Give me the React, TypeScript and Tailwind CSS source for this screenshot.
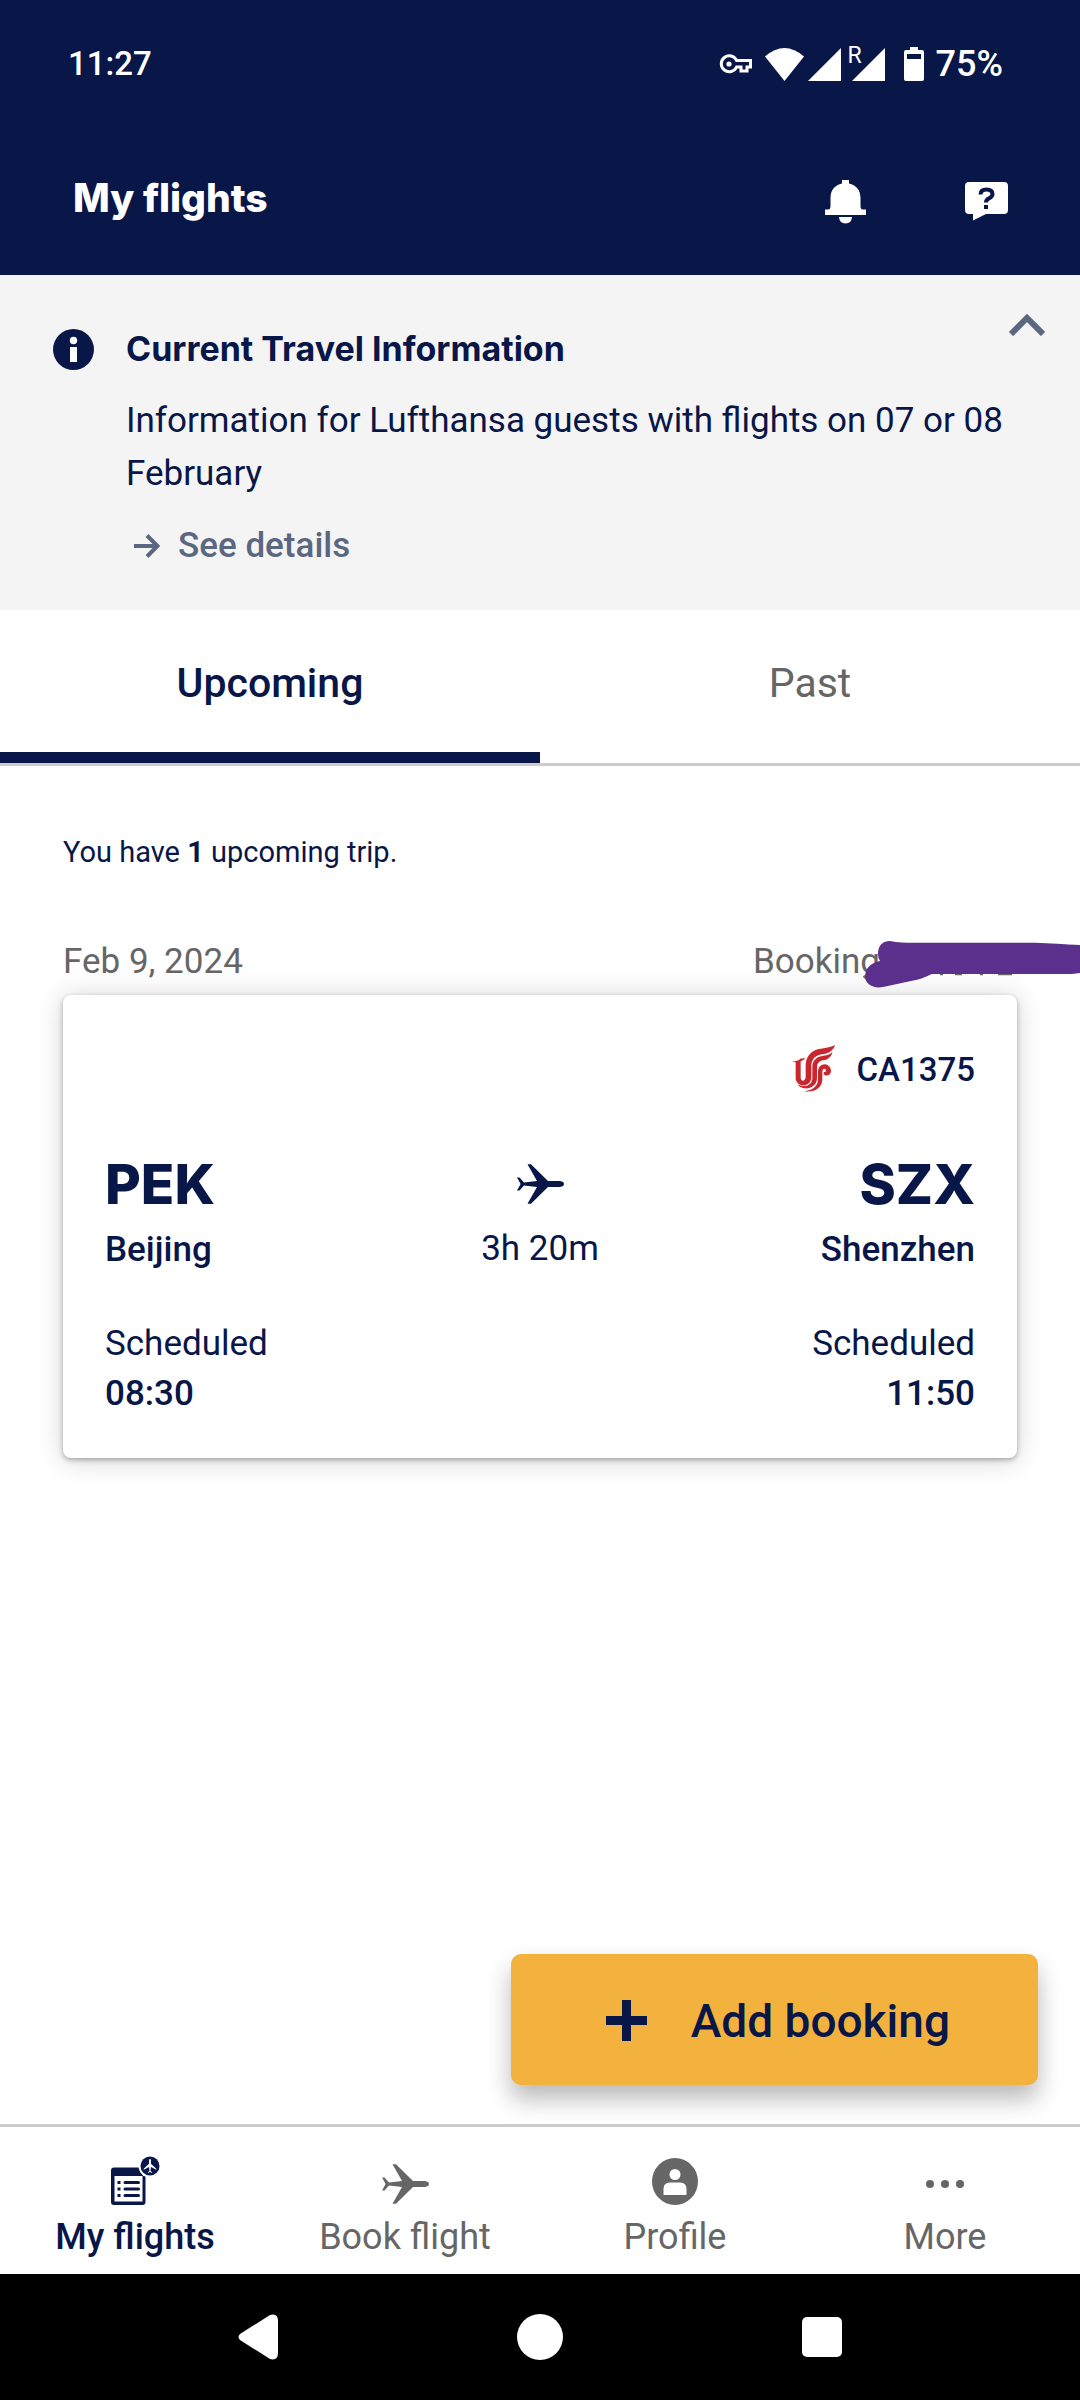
import { useState } from "react";
import type { ReactNode } from "react";

interface IconProps {
  className?: string;
}

const PLANE_PATH =
  "M31 17 L43 17 Q47 17.6 47 20 Q47 22.4 43 23 L31 23 L14 39.7 L10.5 39.7 L20 23 L7 21.6 L2.5 26.6 L0 26.6 L3.6 20 L0 13.4 L2.5 13.4 L7 18.4 L20 17 L10.5 0.3 L14 0.3 Z";

function PlaneIcon({ className }: IconProps) {
  return (
    <svg viewBox="0 0 47 40" className={className} fill="currentColor" aria-hidden="true">
      <path d={PLANE_PATH} />
    </svg>
  );
}

function StatusIcons() {
  return (
    <div className="flex items-center">
      {/* VPN key */}
      <svg viewBox="0 0 34 20" className="h-5 w-[34px]" aria-hidden="true">
        <path
          d="M17.6 6.5 H31.5 V13 H28 V17 H22 V13 H17.6 A8 8 0 1 1 17.6 6.5 Z"
          fill="none"
          stroke="#fff"
          strokeWidth="3"
        />
        <circle cx="10" cy="10" r="2.6" fill="#fff" />
      </svg>
      {/* Wi-Fi */}
      <svg viewBox="0 0 39 33" className="ml-3 h-[33px] w-[39px]" fill="#fff" aria-hidden="true">
        <path d="M0 8.5 Q19.5 -8.5 39 8.5 L19.5 33 Z" />
      </svg>
      {/* Mobile signal */}
      <svg viewBox="0 0 33 33" className="ml-1 h-[33px] w-[33px]" fill="#fff" aria-hidden="true">
        <path d="M33 0 V33 H0 Z" />
      </svg>
      <span className="relative ml-[11px]">
        <svg viewBox="0 0 33 33" className="h-[33px] w-[33px]" fill="#fff" aria-hidden="true">
          <path d="M33 0 V33 H0 Z" />
        </svg>
        <span className="absolute -top-1 -left-1 text-[23px] leading-6">R</span>
      </span>
      {/* Battery */}
      <svg viewBox="0 0 20 34" className="ml-[19px] h-[34px] w-5" aria-hidden="true">
        <path
          d="M6 0 H14 V3 H18 Q20 3 20 5 V32 Q20 34 18 34 H2 Q0 34 0 32 V5 Q0 3 2 3 H6 Z M3 7 V12 H17 V7 Z"
          fill="#fff"
          fillRule="evenodd"
        />
      </svg>
      <span className="ml-3 text-[36px] leading-10 font-medium">75%</span>
    </div>
  );
}

function BellIcon() {
  return (
    <svg viewBox="0 0 41 44" className="h-11 w-[41px]" fill="currentColor" aria-hidden="true">
      <path d="M17 0 H24 V3.5 C31 5 35.5 10 35.5 18 V26 Q35.5 29.5 38 29.5 H41 V35 H0 V29.5 H3 Q5.5 29.5 5.5 26 V18 C5.5 10 10 5 17 3.5 Z" />
      <path d="M14 37 H27 Q26.5 43.5 20.5 43.5 Q14.5 43.5 14 37 Z" />
    </svg>
  );
}

function HelpIcon() {
  return (
    <svg viewBox="0 0 43 39" className="h-[39px] w-[43px]" aria-hidden="true">
      <path
        d="M4 0 H39 Q43 0 43 4 V28 Q43 32 39 32 H21 L8 38.5 V32 H4 Q0 32 0 28 V4 Q0 0 4 0 Z"
        fill="currentColor"
      />
      <path
        d="M15.5 12.5 Q15.5 7.5 21.5 7.5 Q27.5 7.5 27.5 12 Q27.5 14.8 24 16.3 Q21 17.6 21 20.5"
        fill="none"
        stroke="#081648"
        strokeWidth="4"
      />
      <rect x="19" y="23" width="4" height="4" fill="#081648" />
    </svg>
  );
}

function InfoIcon() {
  return (
    <svg viewBox="0 0 41 41" className="mt-[15px] h-[41px] w-[41px] shrink-0" aria-hidden="true">
      <circle cx="20.5" cy="20.5" r="20.5" fill="#081648" />
      <circle cx="20.5" cy="11.5" r="3.7" fill="#fff" />
      <rect x="17" y="18" width="7" height="15" fill="#fff" />
    </svg>
  );
}

function AirChinaLogo() {
  return (
    <svg viewBox="0 0 129 141" className="h-[47px] w-[43px]" fill="#c8282d" role="img" aria-label="Air China">
      <path d="M0 50 L12 48 Q22 46 27 40 Q34 42 41 37 Q36 47 26 49 L26 96 Q26 107 33 107 Q41 106 41 94 V62 C41 30 62 14 86 11 C105 9 118 6 129 0 C124 16 112 25 94 27 C72 30 58 40 58 64 V96 C58 112 47 121 34 121 C20 121 11 110 11 98 V52 Z" />
      <path d="M61 66 C61 44 76 34 94 32 C106 30 116 28 121 20 C120 34 108 44 94 46 C82 48 75 54 75 68 V100 C75 122 54 132 38 130 C28 129 20 124 17 118 C34 129 61 123 61 98 Z" />
      <path d="M78 82 C78 66 86 58 99 58 C110 59 117 68 117 78 C117 88 107 95 98 90 C92 86 95 79 101 80 C104 76 101 71 97 71 C92 71 91 75 91 82 V106 C89 128 70 143 36 139 C62 136 78 124 78 102 Z" />
    </svg>
  );
}

// Marker stroke that hides the booking reference
function Redaction() {
  return (
    <svg viewBox="0 0 215 48" className="absolute top-[3px] -right-[63px] h-12 w-[215px]" aria-hidden="true">
      <path d="M75 34.5 H78 M90 34.5 H97 M115 34.5 H118 M133 34.5 H147" stroke="#666" strokeWidth="1.5" />
      <path
        d="M13 14 C13 5 18 1 25 1 C35 3 45 2.7 55 2.7 H170 C185 3 200 4.5 215 5 V33 L207 34 H67 C60 37 58 38 53 39.5 L18 47 C8 49 0 44 0 36 C1 27 6 23 15 21 Q13 18 13 14 Z"
        fill="#5b2f8c"
      />
    </svg>
  );
}

function MyFlightsIcon() {
  return (
    <svg viewBox="0 0 49 50" className="h-[50px] w-[49px]" aria-hidden="true">
      <path
        d="M3 11.5 H32 V20 H34.5 V46 Q34.5 49 31.5 49 H3 Q0 49 0 46 V14.5 Q0 11.5 3 11.5 Z M3.5 20 V45.5 H31.5 V20 Z"
        fill="#081648"
        fillRule="evenodd"
      />
      <path d="M6.5 26.5 H9.5 M6.5 33 H9.5 M6.5 39.5 H9.5" stroke="#081648" strokeWidth="3" />
      <path
        d="M14 26.5 H27.5 M14 33 H27.5 M14 39.5 H27.5"
        stroke="#081648"
        strokeWidth="3"
        strokeLinecap="round"
      />
      <circle cx="39" cy="10" r="11.5" fill="#fff" />
      <circle cx="39" cy="10" r="9.5" fill="#081648" />
      <path d={PLANE_PATH} fill="#fff" transform="translate(32.6 17) rotate(-90) scale(0.3 0.32)" />
    </svg>
  );
}

function ProfileIcon() {
  return (
    <svg viewBox="0 0 46 47" className="h-[47px] w-[46px]" aria-hidden="true">
      <ellipse cx="23" cy="23.5" rx="23" ry="23.5" fill="#666" />
      <circle cx="23" cy="16.5" r="5.5" fill="#fff" />
      <path d="M11.5 37 V31 Q11.5 24.5 18 24.5 H28 Q34.5 24.5 34.5 31 V37 Z" fill="#fff" />
    </svg>
  );
}

function MoreIcon() {
  return (
    <svg viewBox="0 0 38 8" className="mt-[6px] h-2 w-[38px]" fill="#666" aria-hidden="true">
      <circle cx="4" cy="4" r="4" />
      <circle cx="19" cy="4" r="4" />
      <circle cx="34" cy="4" r="4" />
    </svg>
  );
}

interface EndpointProps {
  code:  string;
  city:  string;
  time:  string;
  align: string;
}

function Endpoint({ code, city, time, align }: EndpointProps) {
  return (
    <div className={align}>
      <p className="font-['Inter',sans-serif] text-[55px] leading-[64px] font-extrabold">{code}</p>
      <p className="mt-[9px] text-[35px] leading-[50px] font-medium">{city}</p>
      <p className="mt-[44px] text-[35px] leading-[50px]">Scheduled</p>
      <p className="text-[35px] leading-[50px] font-medium">{time}</p>
    </div>
  );
}

const navItems: { label: string; icon: ReactNode }[] = [
  { label: "My flights",  icon: <MyFlightsIcon /> },
  { label: "Book flight", icon: <PlaneIcon className="mt-[6px] h-10 w-[47px] text-[#666]" /> },
  { label: "Profile",     icon: <ProfileIcon /> },
  { label: "More",        icon: <MoreIcon /> },
];

const tabs = ["Upcoming", "Past"];

export default function App() {
  const [tab, setTab]           = useState("Upcoming");
  const [section, setSection]   = useState("My flights");
  const [expanded, setExpanded] = useState(true);

  return (
    <div className="flex min-h-screen flex-col bg-white font-['Roboto',sans-serif] text-[#081648]">
      <header className="bg-[#081648] text-white">
        <div className="flex h-32 items-center justify-between pr-[77px] pl-[68px]">
          <span className="text-[33px] leading-10 font-medium">11:27</span>
          <StatusIcons />
        </div>
        <div className="flex h-[147px] items-center justify-between pr-[72px] pl-[73px]">
          <h1 className="pb-2 font-['Inter',sans-serif] text-[39px] leading-[52px] font-extrabold">My flights</h1>
          <div className="flex items-center gap-[99px]">
            <button type="button" aria-label="Notifications" className="cursor-pointer">
              <BellIcon />
            </button>
            <button type="button" aria-label="Help" className="cursor-pointer">
              <HelpIcon />
            </button>
          </div>
        </div>
      </header>

      {/* Travel notice */}
      <section className="flex items-start bg-[#f4f4f4] pt-[39px] pr-[35px] pb-[37px] pl-[53px]">
        <InfoIcon />
        <div className="ml-8 flex-1 pt-2">
          <h2 className="font-['Inter',sans-serif] text-[34px] leading-[54px] font-bold">
            Current Travel Information
          </h2>
          {expanded && (
            <>
              <p className="mt-[18px] text-[35px] leading-[53px]">
                Information for Lufthansa guests with flights on 07 or 08 February
              </p>
              <a href="#details" className="mt-[19px] flex items-center pl-2 text-[#5a6780]">
                <svg viewBox="0 0 26 24" className="h-6 w-[26px]" fill="none" stroke="currentColor" strokeWidth="4" aria-hidden="true">
                  <path d="M0 12 H23 M13 1.5 L23.5 12 L13 22.5" />
                </svg>
                <span className="ml-[18px] text-[35px] leading-[54px] font-medium">See details</span>
              </a>
            </>
          )}
        </div>
        <button
          type="button"
          aria-label="Toggle travel information"
          className="cursor-pointer text-[#5a6780]"
          onClick={() => setExpanded(!expanded)}
        >
          <svg viewBox="0 0 36 22" className="h-[22px] w-9" fill="none" stroke="currentColor" strokeWidth="6" aria-hidden="true">
            <path d="M2 20 L18 4 L34 20" />
          </svg>
        </button>
      </section>

      <div role="tablist" className="flex border-b-3 border-[#ccc]">
        {tabs.map((name) => (
          <button
            key={name}
            type="button"
            role="tab"
            aria-selected={tab === name}
            onClick={() => setTab(name)}
            className={
              tab === name
                ? "h-[153px] flex-1 cursor-pointer border-b-11 border-[#081648] pt-[6px] text-[41px] font-medium"
                : "h-[153px] flex-1 cursor-pointer border-b-11 border-transparent pt-[6px] text-[41px] text-[#666]"
            }
          >
            {name}
          </button>
        ))}
      </div>

      <main className="flex flex-1 flex-col px-[63px] pt-[66px] pb-[39px]">
        <p className="text-[29px] leading-10">
          You have <b className="font-bold">1</b> upcoming trip.
        </p>

        <div className="mt-[65px] flex justify-between text-[35px] leading-[50px] text-[#666]">
          <span>Feb 9, 2024</span>
          <span className="relative w-[264px]">
            Booking
            <Redaction />
          </span>
        </div>

        <article className="mt-[8px] rounded-lg bg-white px-[42px] pt-[50px] pb-[39px] shadow-[0_2px_5px_rgba(0,0,0,0.3),0_2px_28px_rgba(0,0,0,0.18)]">
          <div className="flex items-center justify-end gap-[22px]">
            <AirChinaLogo />
            <span className="pt-[2px] text-[33px] leading-[45px] font-medium">CA1375</span>
          </div>
          <div className="mt-[60px] flex justify-between">
            <Endpoint code="PEK" city="Beijing" time="08:30" align="flex-1" />
            <div className="flex flex-col items-center">
              <PlaneIcon className="mt-3 h-10 w-[47px]" />
              <p className="mt-5 text-[35px] leading-[50px]">3h 20m</p>
            </div>
            <Endpoint code="SZX" city="Shenzhen" time="11:50" align="flex-1 text-right" />
          </div>
        </article>

        <button
          type="button"
          className="-mr-[21px] mt-auto flex h-[131px] cursor-pointer items-center gap-[44px] self-end rounded-[10px] bg-[#f3b13e] pt-[2px] pr-[88px] pl-[95px] shadow-[0_14px_24px_rgba(0,0,0,0.28)]"
        >
          <svg viewBox="0 0 41 41" className="h-[41px] w-[41px]" fill="#081648" aria-hidden="true">
            <path d="M16 0 H25 V16 H41 V25 H25 V41 H16 V25 H0 V16 H16 Z" />
          </svg>
          <span className="text-[46px] leading-[60px] font-medium">Add booking</span>
        </button>
      </main>

      <nav className="grid grid-cols-4 border-t-3 border-[#ccc] bg-white pt-[30px] pb-[13px]">
        {navItems.map((item) => (
          <button
            key={item.label}
            type="button"
            onClick={() => setSection(item.label)}
            className="flex cursor-pointer flex-col items-center"
          >
            <span className="flex h-12 items-center justify-center">{item.icon}</span>
            <span
              className={
                section === item.label
                  ? "mt-2 text-[36px] leading-[48px] font-medium text-[#081648]"
                  : "mt-2 text-[36px] leading-[48px] text-[#666]"
              }
            >
              {item.label}
            </span>
          </button>
        ))}
      </nav>

      {/* Android system bar */}
      <div className="flex h-[126px] items-center justify-center gap-[234px] bg-black">
        <button type="button" aria-label="Back" className="flex w-12 cursor-pointer justify-center">
          <svg viewBox="0 0 40 46" className="h-[46px] w-10" fill="#fff" aria-hidden="true">
            <path d="M2 20 L32 1 Q40 -1 40 7 V39 Q40 47 32 45 L2 26 Q-1 23 2 20 Z" />
          </svg>
        </button>
        <button type="button" aria-label="Home" className="flex w-12 cursor-pointer justify-center">
          <span className="size-[46px] rounded-full bg-white" />
        </button>
        <button type="button" aria-label="Recents" className="flex w-12 cursor-pointer justify-center">
          <span className="size-10 rounded-[5px] bg-white" />
        </button>
      </div>
    </div>
  );
}
